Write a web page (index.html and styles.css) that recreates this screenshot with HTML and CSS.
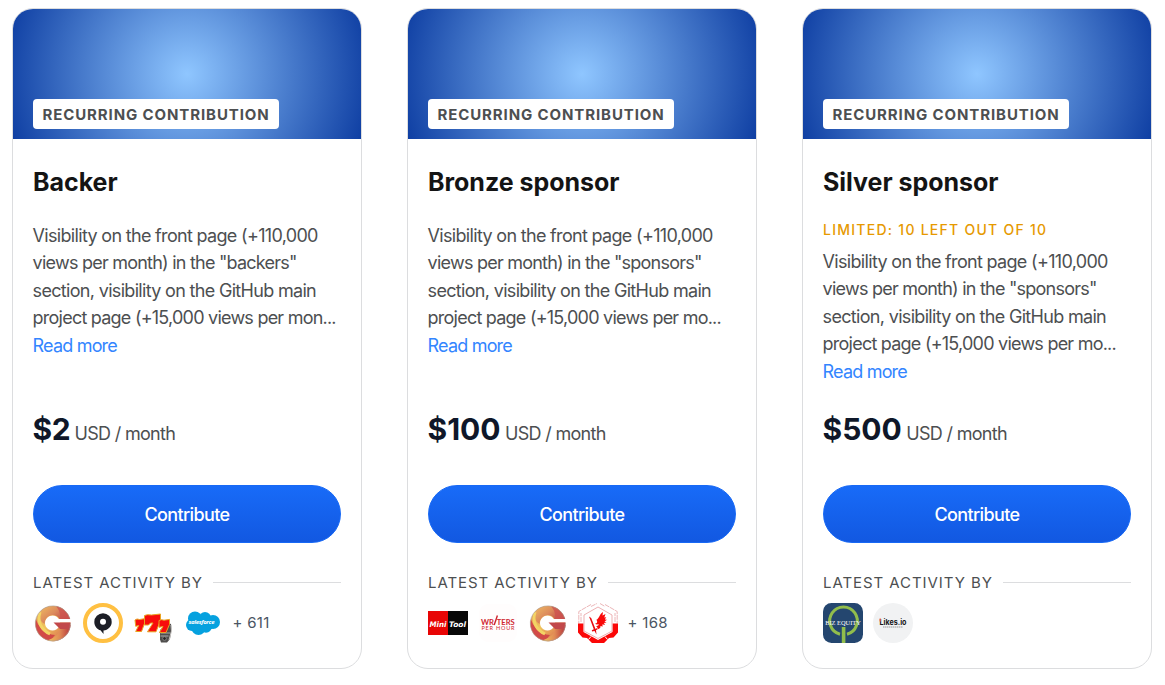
FILE: index.html
```html
<!DOCTYPE html>
<html lang="en">
<head>
<meta charset="utf-8">
<title>Sponsor tiers</title>
<link rel="stylesheet" href="styles.css">
</head>
<body>
<svg class="defs" aria-hidden="true">
  <defs>
    <linearGradient id="gA" x1="0" y1="0" x2="1" y2="1"><stop offset="0" stop-color="#d77b52"/><stop offset=".45" stop-color="#f0c55c"/><stop offset="1" stop-color="#d0454a"/></linearGradient>
    <linearGradient id="gB" x1="0" y1="0" x2="1" y2=".7"><stop offset="0" stop-color="#f0bd62"/><stop offset=".5" stop-color="#dc8a5c"/><stop offset="1" stop-color="#b8363f"/></linearGradient>
    <linearGradient id="gC" x1="0" y1="0" x2="1" y2="0"><stop offset="0" stop-color="#f5d25e"/><stop offset=".55" stop-color="#e08a55"/><stop offset="1" stop-color="#b02636"/></linearGradient>
    <clipPath id="gRing"><path clip-rule="evenodd" d="M20 3a17.600 17.600 0 1 0 .01 0ZM19.500 12.500a7.500 7.500 0 1 1-.01 0Z"/></clipPath>
    <symbol id="g-logo" viewBox="0 0 40 40">
      <g clip-path="url(#gRing)">
        <path d="M0 0h40v40H0z" fill="url(#gA)"/>
        <path d="M7 8C13 1 27 0 34 9L38 17H27C23 9 12 12 11.500 21C7 18 5 13 7 8Z" fill="url(#gB)"/>
        <path d="M22 2C31 3 36 9 38 17H27C28 11 26 6 22 2Z" fill="#cd5450" opacity=".8"/>
        <path d="M2 13C5 25 12 31 22 32C19 36 16 38 12 38C3 33 0 22 2 13Z" fill="#d24a47"/>
        <path d="M7 9C4 18 8 27 17 31" fill="none" stroke="#f3d465" stroke-width="3"/>
        <path d="M12 38C22 36 28 30 28 22H39V40H12Z" fill="url(#gC)"/>
      </g>
      <path d="M21.500 16H39v3.500H21.500Z" fill="#fff"/>
      <path d="M20.500 19.400H37.500L36.500 26H27Z" fill="#c2484a"/>
      <path d="M36.800 15.500A17.600 17.600 0 1 0 37.500 20" fill="none" stroke="#a9a09b" stroke-width=".6"/>
    </symbol>
  </defs>
</svg>
<main class="tiers">
  <article class="card">
    <div class="banner"><span class="badge">RECURRING CONTRIBUTION</span></div>
    <div class="body">
      <h2 class="title">Backer</h2>
      <div class="copy">
        <p class="text">Visibility on the front page (+110,000<br><span class="tight">views per month) in the "backers"</span><br>section, visibility on the GitHub main<br><span class="tight">project page (+15,000 views per mon...</span></p>
        <a class="more">Read more</a>
      </div>
      <p class="price"><strong class="amount short">$2</strong> <span class="unit">USD / month</span></p>
      <button class="contribute">Contribute</button>
      <div class="activity">LATEST ACTIVITY BY</div>
      <div class="people">
        <svg class="avatar" viewBox="0 0 40 40"><use href="#g-logo"/></svg>
        <svg class="avatar" viewBox="0 0 40 40"><circle cx="20" cy="20" r="18" fill="#fff" stroke="#ffc042" stroke-width="4"/><path d="M20 10.200a8.700 8.700 0 0 0-8.700 8.700c0 4.200 3 7.500 6.200 8.400L20.500 31v-3.500c4.500-.5 8.200-4 8.200-8.600A8.700 8.700 0 0 0 20 10.200Z" fill="#1c1e26"/><circle cx="20" cy="18.800" r="3" fill="#fff"/></svg>
        <svg class="avatar" viewBox="0 0 40 40">
          <path d="M27 27l8-7 3 1 .5 5-1.500 10-3 3.500h-6l-1-3Z" fill="#504e4d"/><path d="M27.500 30h9.500M27.500 33h8" stroke="#aaa" stroke-width="1"/><circle cx="31.500" cy="35.500" r="1.800" fill="#222" stroke="#999" stroke-width=".7"/><path d="M38 22l.5 6-2.500 9" stroke="#c7c4c1" fill="none"/>
          <g fill="#f80c0c" stroke="#e9a321" stroke-width="1" stroke-linejoin="round">
            <path d="M2 17l2-1 2.500.5 5-.8v4.800l-3 8H2.700l3-6-3 .8Z"/>
            <path d="M11.500 12.500l3-.8 4 .3 9-1v6.500L23 28.800h-8.500l5.500-8.800h-2.500l-2 2h-4Z"/>
            <path d="M26 17.500l2.500-.8 2.500.5 5.500-.8v5L33 29.500h-6.500l3.500-6-4 .8Z"/>
          </g>
        </svg>
        <svg class="avatar" viewBox="0 0 40 40"><g fill="#05a1df"><circle cx="12" cy="15.500" r="7"/><circle cx="22" cy="15" r="6"/><circle cx="30" cy="19" r="7"/><circle cx="9" cy="22" r="6"/><circle cx="15.500" cy="25" r="7"/><circle cx="23" cy="24" r="5.800"/><path d="M9 14h20v12H9z"/></g><text class="salesforce" x="5.500" y="21.200" textLength="26">salesforce</text></svg>
        <span class="count">+ 611</span>
      </div>
    </div>
  </article>

  <article class="card">
    <div class="banner"><span class="badge">RECURRING CONTRIBUTION</span></div>
    <div class="body">
      <h2 class="title">Bronze sponsor</h2>
      <div class="copy">
        <p class="text">Visibility on the front page (+110,000<br><span class="tight">views per month) in the "sponsors"</span><br>section, visibility on the GitHub main<br><span class="tight">project page (+15,000 views per mo...</span></p>
        <a class="more">Read more</a>
      </div>
      <p class="price"><strong class="amount">$100</strong> <span class="unit">USD / month</span></p>
      <button class="contribute">Contribute</button>
      <div class="activity">LATEST ACTIVITY BY</div>
      <div class="people">
        <svg class="avatar" viewBox="0 0 40 40"><path d="M0 8h20v24H0z" fill="#e80505"/><path d="M20 8h20v24H20z" fill="#080808"/><text class="minitool" x="1.500" y="23.500" textLength="17" lengthAdjust="spacingAndGlyphs">Mini</text><text class="minitool" x="21" y="23.500" textLength="17" lengthAdjust="spacingAndGlyphs">Tool</text></svg>
        <svg class="avatar" viewBox="0 0 40 40"><rect x="1" y="1" width="38" height="38" rx="9" fill="#fffdfd"/><text class="writers" x="3" y="21.800" textLength="13" lengthAdjust="spacingAndGlyphs">WR</text><path d="M16.200 22l3.200-9.500" stroke="#cf2630" stroke-width="1.400"/><text class="writers" x="18.800" y="21.800" textLength="18" lengthAdjust="spacingAndGlyphs">TERS</text><text class="perhour" x="3.500" y="27.200" textLength="33">PER HOUR</text></svg>
        <svg class="avatar" viewBox="0 0 40 40"><use href="#g-logo"/></svg>
        <svg class="avatar" viewBox="0 0 40 40">
          <path d="M13 1.500L.8 8.500v12M27 1.500L39.200 8.500v12M13 3.500l6-3M22 .5l5 3M3 19v-9M37 19v-9" fill="none" stroke="#e6a3a6" stroke-width=".8" stroke-dasharray="5 .8"/>
          <path d="M0 20.500h5.500v8.500L20 37l14.500-8V20.500H40v9l-4.500 5-4.500.5-5 5H14l-5-5-4.500-.5L0 29.500Z" fill="#fb0707"/>
          <path d="M6 12v16l14 7.500L34 28V12L20 4Z" fill="#fff" stroke="#eba8aa" stroke-width=".9"/>
          <path d="M13 33.500l-2.500 3M27 33.500l2.500 3" stroke="#fff" stroke-width="1"/>
          <path d="M11 13.500l2.200 1.500L17.500 26l1.500-1 .3 1.500-1.300.8.5 4.200-2-3.500-2.500.5-.2-1.200 2-1Z" fill="#e60b12"/>
          <path d="M18 17c3.500-1 3-6 7-8l-.5 3.500L27.500 11l-1.200 3.500 2-.3-1.500 2.300 2.200.3-2.500 1.700 2 1-2.800.6 1.500 1.600-3-.1.600 1.800-2.300-.5-.3 2-2.700 1.600c.3-2-.3-2.500-1.500-3.500 2 .2 2.800-.8 2.500-2-1 .6-2.500.6-3.500-.5 2 0 3-1.500 1.500-3.500Z" fill="#fa0808"/>
        </svg>
        <span class="count">+ 168</span>
      </div>
    </div>
  </article>

  <article class="card">
    <div class="banner"><span class="badge">RECURRING CONTRIBUTION</span></div>
    <div class="body">
      <h2 class="title">Silver sponsor</h2>
      <div class="copy">
        <p class="limited">LIMITED: 10 LEFT OUT OF 10</p>
        <p class="text">Visibility on the front page (+110,000<br><span class="tight">views per month) in the "sponsors"</span><br>section, visibility on the GitHub main<br><span class="tight">project page (+15,000 views per mo...</span></p>
        <a class="more">Read more</a>
      </div>
      <p class="price"><strong class="amount">$500</strong> <span class="unit">USD / month</span></p>
      <button class="contribute">Contribute</button>
      <div class="activity">LATEST ACTIVITY BY</div>
      <div class="people">
        <svg class="avatar" viewBox="0 0 40 40"><rect width="40" height="40" rx="8.500" fill="#24466f"/><path d="M17 31.200A13.800 13.800 0 1 1 24 31.200" fill="none" stroke="#91bd4c" stroke-width="3"/><path d="M18.800 24h3.600v16h-3.600z" fill="#91bd4c"/><text class="biz" x="20" y="22.300">BIZ EQUITY</text></svg>
        <svg class="avatar" viewBox="0 0 40 40"><circle cx="20" cy="20" r="20" fill="#f1f2f3"/><text class="likes" x="6.500" y="22" textLength="27" lengthAdjust="spacingAndGlyphs">Likes.io</text><path d="M7.200 15.500v3" stroke="#e9574a" stroke-width="1.300"/><path d="M10 24h20" stroke="#777" stroke-width=".7" stroke-dasharray="1.500 .5"/></svg>
      </div>
    </div>
  </article>
</main>
</body>
</html>
```
FILE: styles.css
```css
* { box-sizing: border-box; }
body { margin: 0; background: #fff; font-family: Inter, "Liberation Sans", sans-serif; }
p, h2 { margin: 0; }
.defs { position: absolute; width: 0; height: 0; }
.tiers { display: flex; gap: 45px; padding: 8px 0 0 12px; }
.card {
  flex: none;
  width: 350px;
  height: 661px;
  border: 1px solid #dcdddf;
  border-radius: 21px;
  overflow: hidden;
}
.banner {
  height: 130px;
  padding: 0 20px 10px;
  display: flex;
  align-items: flex-end;
  background: radial-gradient(circle, #8fc6ff 0%, #0f3fa3 100%);
}
.badge {
  height: 30px;
  width: 246px;
  padding-left: 9.5px;
  border-radius: 4px;
  background: #fff;
  color: #4d4f51;
  font-size: 15px;
  font-weight: 700;
  line-height: 31px;
  letter-spacing: 0.89px;
  white-space: nowrap;
}
.body { padding: 26px 20px 0; }
.title { font-size: 25px; line-height: 34px; font-weight: 700; color: #141414; letter-spacing: -0.03px; white-space: nowrap; }
.copy { height: 184px; padding-top: 22.75px; font-size: 18px; line-height: 27.5px; letter-spacing: -0.72px; color: #4d4f51; white-space: nowrap; }
.text, .more { margin-left: -0.4px; }
.text { letter-spacing: -0.68px; }
.tight { letter-spacing: -0.77px; }
.limited { height: 26px; margin-top: -3px; margin-bottom: 3px; font-size: 14px; line-height: 22px; letter-spacing: 1.26px; font-weight: 500; color: #e69900; }
.more { color: #3385ff; letter-spacing: -0.82px; }
.price { height: 51px; margin-top: 21px; line-height: 51px; white-space: nowrap; color: #4d4f51; font-size: 18px; letter-spacing: -0.68px; }
.amount { margin-left: -0.5px; font-size: 30px; font-weight: 700; color: #0f1729; letter-spacing: 0; }
.short { letter-spacing: -0.5px; }
.contribute {
  display: block;
  width: 308px;
  height: 58px;
  margin-top: 30px;
  padding: 0;
  border: 1px solid #1869f5;
  border-radius: 29px;
  background: linear-gradient(#186bf8, #1258e1);
  color: #fff;
  font: 500 18px Inter, sans-serif;
  letter-spacing: -0.62px;
}
.activity {
  display: flex;
  align-items: center;
  gap: 10px;
  height: 24px;
  margin-top: 27px;
  color: #4d4f51;
  font-size: 15px;
  letter-spacing: 0.93px;
  white-space: nowrap;
}
.activity::after { content: ""; flex: 1; height: 1px; margin-top: 1px; background: #dcdddf; }
.people { display: flex; align-items: center; gap: 10px; height: 40px; margin-top: 9px; }
.avatar { flex: none; width: 40px; height: 40px; }
.count { color: #4b5563; font-size: 15px; letter-spacing: 0.3px; padding-bottom: 2px; margin-left: -0.5px; }
.salesforce { font: italic 700 6px "Open Sans", sans-serif; fill: #fff; }
.minitool { font: italic 700 7.5px "DejaVu Sans", sans-serif; fill: #fff; }
.writers { font: 700 8px Lato, sans-serif; fill: #cf2630; }
.perhour { font: 400 5.5px Lato, sans-serif; fill: #cf2630; }
.biz { font: 400 6.4px "Liberation Serif", serif; fill: #fff; text-anchor: middle; }
.likes { font: 700 8px Inter, sans-serif; fill: #171717; }
```
